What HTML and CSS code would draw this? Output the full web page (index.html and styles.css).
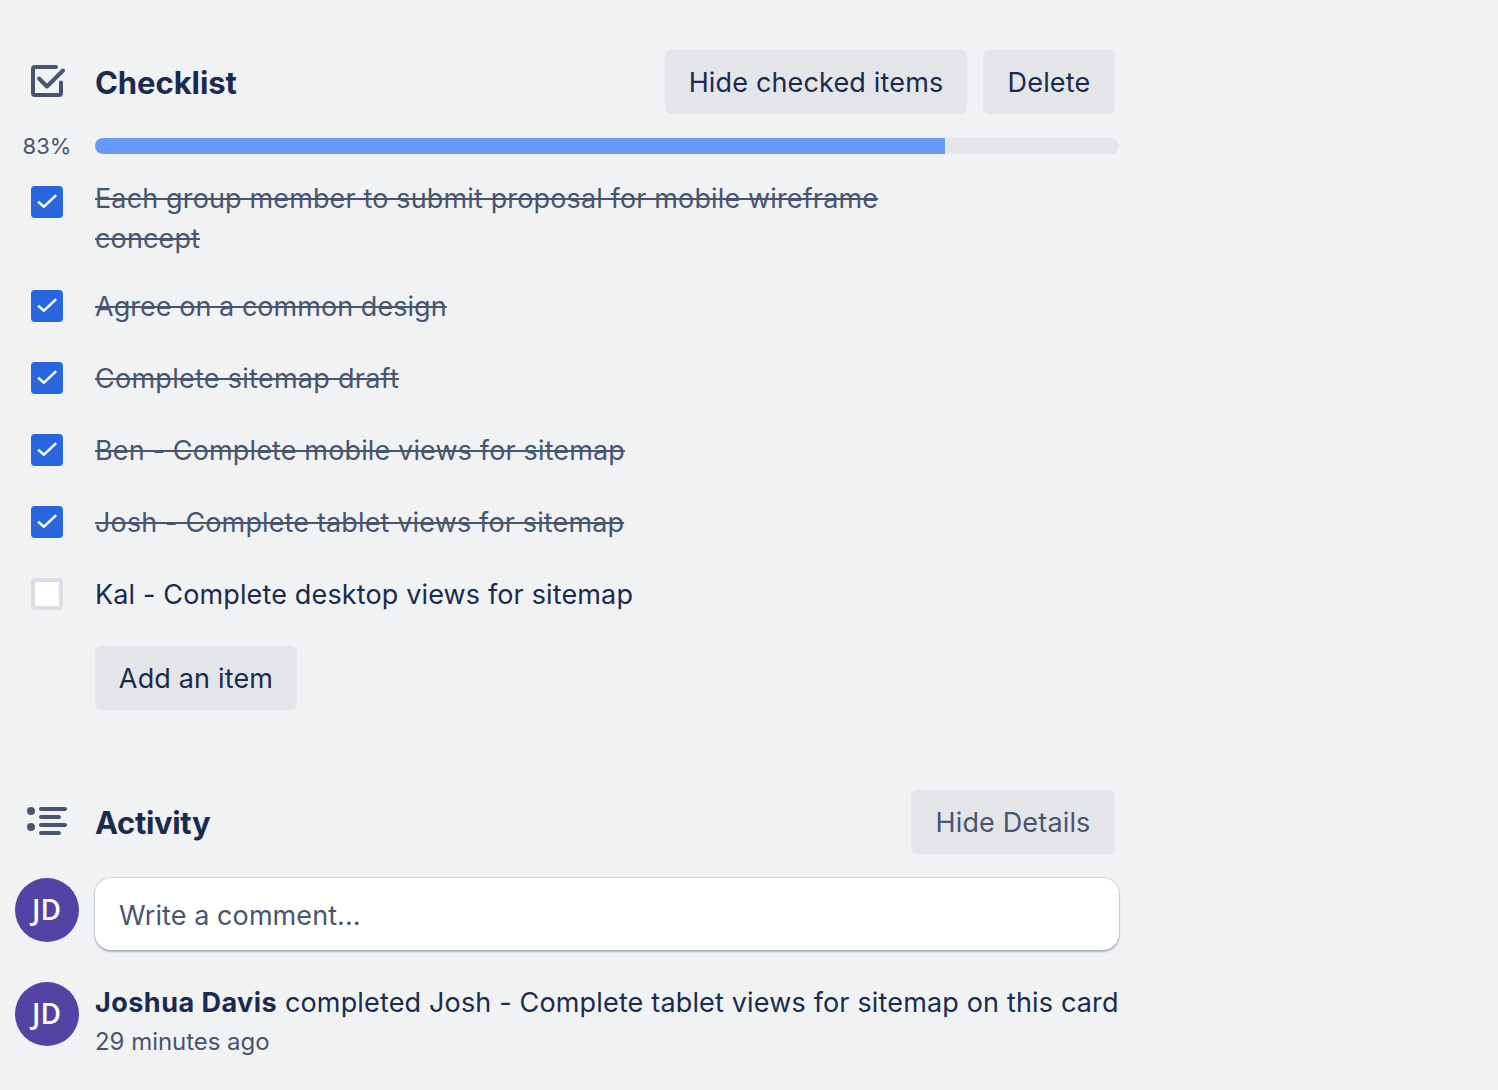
FILE: index.html
```html
<!DOCTYPE html>
<html lang="en">
<head>
<meta charset="utf-8">
<title>Checklist</title>
<link rel="stylesheet" href="styles.css">
</head>
<body>
<svg class="sprite" width="0" height="0" aria-hidden="true">
  <symbol id="tick" viewBox="0 0 32 32"><path d="M7.8 16.2 L13 20.7 L24.4 9.8" fill="none" stroke="#fff" stroke-width="2.5" stroke-linecap="round" stroke-linejoin="round"/></symbol>
</svg>
<main class="card">
  <section class="checklist">
    <header class="head">
      <svg class="head-icon" viewBox="0 0 48 48" fill="none" stroke="#47556f" stroke-width="4" stroke-linecap="round" stroke-linejoin="round"><path d="M33 9 H12 Q10 9 10 11 V35 Q10 37 12 37 H36 Q38 37 38 35 V24.5"/><path d="M16 20.5 L24 28.5 L40 12.5"/></svg>
      <h2 class="title">Checklist</h2>
      <button class="btn wide">Hide checked items</button>
      <button class="btn delete">Delete</button>
    </header>
    <div class="progress">
      <span class="percent">83%</span>
      <div class="track"><div class="fill" style="width:83%"></div></div>
    </div>
    <ul class="items">
      <li class="item tall"><span class="box done"><svg width="32" height="32"><use href="#tick"/></svg></span><span class="label struck">Each group member to submit proposal for mobile wireframe<br>concept</span></li>
      <li class="item"><span class="box done"><svg width="32" height="32"><use href="#tick"/></svg></span><span class="label struck agree">Agree on a common design</span></li>
      <li class="item"><span class="box done"><svg width="32" height="32"><use href="#tick"/></svg></span><span class="label struck draft">Complete sitemap draft</span></li>
      <li class="item"><span class="box done"><svg width="32" height="32"><use href="#tick"/></svg></span><span class="label struck">Ben - Complete mobile views for sitemap</span></li>
      <li class="item"><span class="box done"><svg width="32" height="32"><use href="#tick"/></svg></span><span class="label struck">Josh - Complete tablet views for sitemap</span></li>
      <li class="item"><span class="box"></span><span class="label">Kal - Complete desktop views for sitemap</span></li>
    </ul>
    <button class="btn add">Add an item</button>
  </section>
  <section class="activity">
    <header class="head">
      <svg class="head-icon" viewBox="0 0 48 48" fill="none" stroke="#47556f" stroke-width="4" stroke-linecap="round"><path d="M18 11 H42 M18 19 H36 M18 27 H42 M18 35 H36"/><g fill="#47556f" stroke="none"><circle cx="8" cy="13" r="4"/><circle cx="8" cy="29" r="4"/></g></svg>
      <h2 class="title act">Activity</h2>
      <button class="btn details">Hide Details</button>
    </header>
    <div class="row compose">
      <span class="avatar">JD</span>
      <div class="comment">Write a comment...</div>
    </div>
    <div class="row event">
      <span class="avatar">JD</span>
      <div class="entry">
        <p class="line"><b class="who">Joshua Davis</b> completed Josh - Complete tablet views for sitemap on this card</p>
        <p class="time">29 minutes ago</p>
      </div>
    </div>
  </section>
</main>
</body>
</html>
```
FILE: styles.css
```css
* { box-sizing: border-box; }
body { margin: 0; background: #f1f2f4; color: #1b2b4d; font-family: Inter, "Liberation Sans", sans-serif; font-size: 27px; font-weight: 430; line-height: 40px; letter-spacing: .14px; }
.sprite { display: block; height: 0; }
.card { width: 1119px; padding: 50px 0 0 15px; }
.head { display: flex; align-items: center; height: 64px; padding-right: 4px; }
.head-icon { width: 48px; height: 48px; margin: 0 24px 0 8px; flex: none; }
.title { margin: 0 auto 0 0; padding-top: 1px; font-size: 31px; font-weight: 650; line-height: 40px; letter-spacing: -.06px; white-space: nowrap; }
.act { letter-spacing: -.35px; }
.btn { height: 64px; padding: 2px 0 0; border: 0; border-radius: 6px; background: #e4e5e9; color: #1b2b4d; font: inherit; letter-spacing: .16px; text-align: center; white-space: nowrap; }
.wide { width: 302px; }
.delete { width: 132px; margin-left: 16px; }
.details { width: 204px; color: #47556f; }
.add { display: block; width: 202px; margin: 32px 0 0 80px; }
.progress { display: flex; align-items: center; height: 16px; margin-top: 24px; }
.percent { width: 64px; margin-right: 16px; text-align: center; color: #47556f; font-size: 22px; letter-spacing: 0; }
.track { flex: 1; height: 16px; border-radius: 8px; background: #e4e5e9; overflow: hidden; }
.fill { height: 100%; background: #689bf7; }
.items { list-style: none; margin: 24px 0 0; padding: 0; display: grid; gap: 32px; }
.item { display: flex; align-items: flex-start; height: 40px; }
.item.tall { height: 76px; }
.box { flex: none; width: 32px; height: 32px; margin: 4px 32px 0 16px; border-radius: 4px; background: #fff; border: 4px solid #dddee4; }
.tall .box { margin-top: 8px; }
.box.done { border: 0; background: #2b65dd; }
.box svg { display: block; }
.label { padding-top: 1px; white-space: nowrap; }
.agree { letter-spacing: .04px; }
.draft { letter-spacing: .27px; }
.struck { color: #47556f; text-decoration: line-through; text-decoration-thickness: 2px; }
.activity { margin-top: 80px; }
.row { display: flex; align-items: flex-start; }
.avatar { flex: none; width: 64px; height: 64px; margin-right: 16px; padding-right: 1px; border-radius: 50%; background: #5144a5; color: #fff; font-family: "Open Sans", "Noto Sans", sans-serif; font-size: 28px; font-weight: 600; line-height: 62px; letter-spacing: 0; text-align: center; }
.compose { margin-top: 24px; }
.comment { flex: 1; height: 72px; padding: 18px 24px; border-radius: 16px; background: #fff; color: #47556f; letter-spacing: .08px; box-shadow: 0 2px 2px rgba(9,30,66,.25), 0 0 1px 1px rgba(9,30,66,.13); }
.event { margin-top: 32px; }
.line, .time { margin: 0; white-space: nowrap; }
.line { height: 40px; padding-top: 1px; letter-spacing: .16px; }
.who { font-weight: 700; letter-spacing: .47px; }
.time { color: #47556f; font-size: 24px; letter-spacing: -.04px; }
```
